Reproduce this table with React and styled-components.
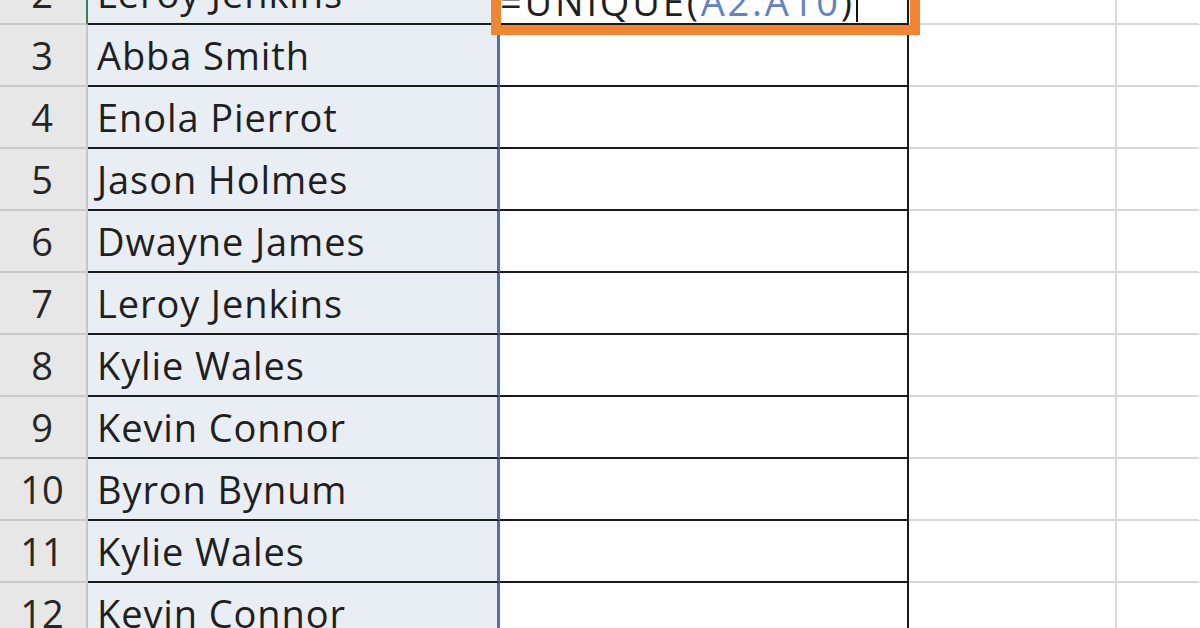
import styled, { createGlobalStyle } from "styled-components"

const GlobalStyle = createGlobalStyle`
    html, body {
        margin: 0;
        padding: 0;
        background: #ffffff;
        overflow: hidden;
    }
    body {
        font-family: "Open Sans", "Liberation Sans", sans-serif;
    }
`

const Sheet = styled.div`
    width: 1200px;
    height: 628px;
    overflow: hidden;
`

const Rows = styled.div`
    display: flex;
    flex-direction: column;
    margin-top: -37px;
`

const Row = styled.div`
    display: grid;
    grid-template-columns: 88px 412px 409px 208px 1fr;
    height: 62px;
`

const Cell = styled.div`
    box-sizing: border-box;
    height: 62px;
    font-size: 38px;
    line-height: 60px;
    color: #1f1f1f;
    white-space: nowrap;
`

const RowHead = styled(Cell)`
    background: #e7e7e7;
    border-bottom: 2px solid #c9c9c9;
    border-right: 2px solid ${({ $active }) => ($active ? "#3e7c55" : "#c6c6c6")};
    text-align: center;
    padding-right: 2px;
    color: #262626;
`

const NameCell = styled(Cell)`
    background: #e9edf4;
    border-bottom: 2px solid #1a1a1a;
    border-right: 3px solid #4f72aa;
    padding-left: 9px;
    letter-spacing: 0.9px;
`

const OutCell = styled(Cell)`
    position: relative;
    background: #ffffff;
    border-bottom: 2px solid #1a1a1a;
    border-right: 2px solid #1a1a1a;
`

const PlainCell = styled(Cell)`
    background: #ffffff;
    border-bottom: 2px solid #d8d8d8;
    border-right: 2px solid ${({ $last }) => ($last ? "transparent" : "#d8d8d8")};
`

const EditBox = styled.div`
    position: absolute;
    z-index: 3;
    left: -9px;
    right: -13px;
    top: -10px;
    bottom: -12px;
    border: 10px solid #ef8633;
    pointer-events: none;
`

const Formula = styled.span`
    position: relative;
    top: 8px;
    letter-spacing: 2.8px;
    color: #1f1f1f;
`

const Ref = styled.span`
    color: #5f84c0;
`

const Caret = styled.span`
    display: inline-block;
    width: 2px;
    height: 60px;
    margin-left: 1px;
    background: #111;
    vertical-align: top;
    position: relative;
    top: -1px;
`

const names = [
    "Leroy Jenkins",
    "Abba Smith",
    "Enola Pierrot",
    "Jason Holmes",
    "Dwayne James",
    "Leroy Jenkins",
    "Kylie Wales",
    "Kevin Connor",
    "Byron Bynum",
    "Kylie Wales",
    "Kevin Connor",
]

export default function App() {
    return (
        <Sheet>
            <GlobalStyle />
            <Rows>
                {names.map((name, i) => {
                    const num = i + 2
                    return (
                        <Row key={num}>
                            <RowHead $active={num === 2}>{num}</RowHead>
                            <NameCell>{name}</NameCell>
                            <OutCell>
                                {num === 2 && (
                                    <>
                                        <EditBox />
                                        <Formula>
                                            =UNIQUE(<Ref>A2:A10</Ref>)
                                        </Formula>
                                        <Caret />
                                    </>
                                )}
                            </OutCell>
                            <PlainCell />
                            <PlainCell $last />
                        </Row>
                    )
                })}
            </Rows>
        </Sheet>
    )
}
